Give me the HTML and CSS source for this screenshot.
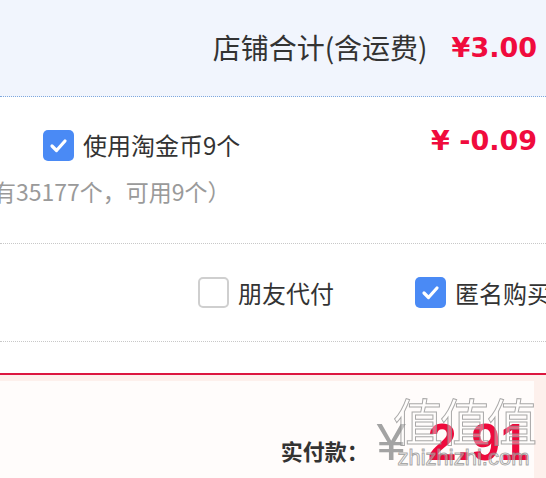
FILE: index.html
```html
<!DOCTYPE html>
<html lang="zh-CN">
<head>
    <meta charset="UTF-8">
    <meta name="viewport" content="width=device-width, initial-scale=1.0">
    <title>订单结算</title>
    <link rel="stylesheet" href="styles.css">
</head>
<body>
    <div class="page">
        <!-- shop subtotal -->
        <div class="shop-total">
            <span class="shop-label">店铺合计(含运费)</span>
            <span class="price">¥3.00</span>
        </div>

        <!-- coins -->
        <div class="coin-row">
            <div class="coin-info">
                <label class="check">
                    <span class="box on">
                        <svg viewBox="0 0 31 31" width="31" height="31"><path d="M9 16 L13.5 20.5 L22 11" /></svg>
                    </span>
                    使用淘金币9个
                </label>
                <div class="coin-note">（共有35177个，可用9个）</div>
            </div>
            <span class="price coin-price">¥ -0.09</span>
        </div>

        <!-- options -->
        <div class="options">
            <label class="check">
                <span class="box"></span>
                朋友代付
            </label>
            <label class="check">
                <span class="box on">
                    <svg viewBox="0 0 31 31" width="31" height="31"><path d="M9 16 L13.5 20.5 L22 11" /></svg>
                </span>
                匿名购买
            </label>
        </div>

        <!-- pay bar -->
        <div class="pay-bar">
            <div class="pay-inner">
                <span class="pay-label">实付款：</span>
                <span class="pay-yen">¥</span>
                <span class="pay-total">2.91</span>
                <div class="watermark">
                    <div class="wm-big">值值值</div>
                    <div class="wm-small">zhizhizhi.com</div>
                </div>
            </div>
        </div>
    </div>
</body>
</html>
```

FILE: styles.css
```css
body {
    margin: 0;
    padding: 0;
    background-color: #ffffff;
    font-family: "Noto Sans CJK SC", "Noto Sans", sans-serif;
    color: #333333;
    overflow: hidden;
}

.page {
    width: 546px;
    white-space: nowrap;
}

.shop-total {
    height: 97px;
    box-sizing: border-box;
    background-color: #f1f5fd;
    border-bottom: 1px dotted #7fa8de;
    display: flex;
    justify-content: flex-end;
    align-items: center;
    padding-right: 9px;
    padding-bottom: 2px;
}

.shop-label {
    font-size: 28px;
    margin-right: 24px;
}

.price {
    font-family: "DejaVu Sans", sans-serif;
    font-weight: bold;
    font-size: 27px;
    color: #f00b3d;
}

.coin-row {
    height: 147px;
    box-sizing: border-box;
    border-bottom: 1px dotted #c8c8c8;
    display: flex;
    justify-content: space-between;
    align-items: flex-start;
    padding: 32px 9px 0 43px;
}

.coin-price {
    line-height: 32px;
    margin-top: -4px;
}

.check {
    display: flex;
    align-items: center;
    font-size: 24px;
    line-height: 32px;
}

.box {
    width: 31px;
    height: 31px;
    box-sizing: border-box;
    border: 2px solid #cfcfcf;
    border-radius: 5px;
    margin-right: 9px;
    background-color: #ffffff;
}

.box.on {
    border: none;
    background-color: #4a8af5;
}

.box svg {
    display: block;
}

.box svg path {
    fill: none;
    stroke: #ffffff;
    stroke-width: 3.2;
    stroke-linecap: round;
    stroke-linejoin: round;
}

.coin-note {
    font-size: 23px;
    line-height: 30px;
    color: #9a9a9a;
    margin-top: 15px;
    margin-left: -96px;
}

.options {
    height: 98px;
    box-sizing: border-box;
    border-bottom: 1px dotted #c8c8c8;
    display: flex;
    align-items: center;
    gap: 81px;
    padding-left: 198px;
    margin-bottom: 31px;
}

.pay-bar {
    border-top: 2px solid #dc1740;
    background-color: #fdf0ec;
    padding: 6px 12px 0 0;
}

.pay-inner {
    position: relative;
    height: 110px;
    background-color: #fffcfb;
    display: flex;
    justify-content: flex-end;
    align-items: baseline;
    padding-right: 5px;
    padding-top: 31px;
    box-sizing: border-box;
}

.pay-label {
    font-size: 22px;
    font-weight: bold;
    margin-right: 8px;
}

.pay-yen {
    font-family: "Liberation Sans", sans-serif;
    font-size: 52px;
    color: #a3a3a3;
    margin-right: 22px;
}

.pay-total {
    font-family: "Liberation Sans", sans-serif;
    font-weight: bold;
    font-size: 52px;
    color: #ee0a3c;
}

/* watermark sits over the price */
.watermark {
    position: absolute;
    left: 393px;
    top: 10px;
    text-align: center;
    color: rgba(255, 255, 255, 0.35);
    -webkit-text-stroke: 1px rgba(140, 140, 140, 0.75);
}

.wm-big {
    font-size: 50px;
    line-height: 56px;
    letter-spacing: -3px;
}

.wm-small {
    font-family: "Liberation Sans", sans-serif;
    font-size: 22px;
    line-height: 22px;
    margin-top: 0;
}
```
